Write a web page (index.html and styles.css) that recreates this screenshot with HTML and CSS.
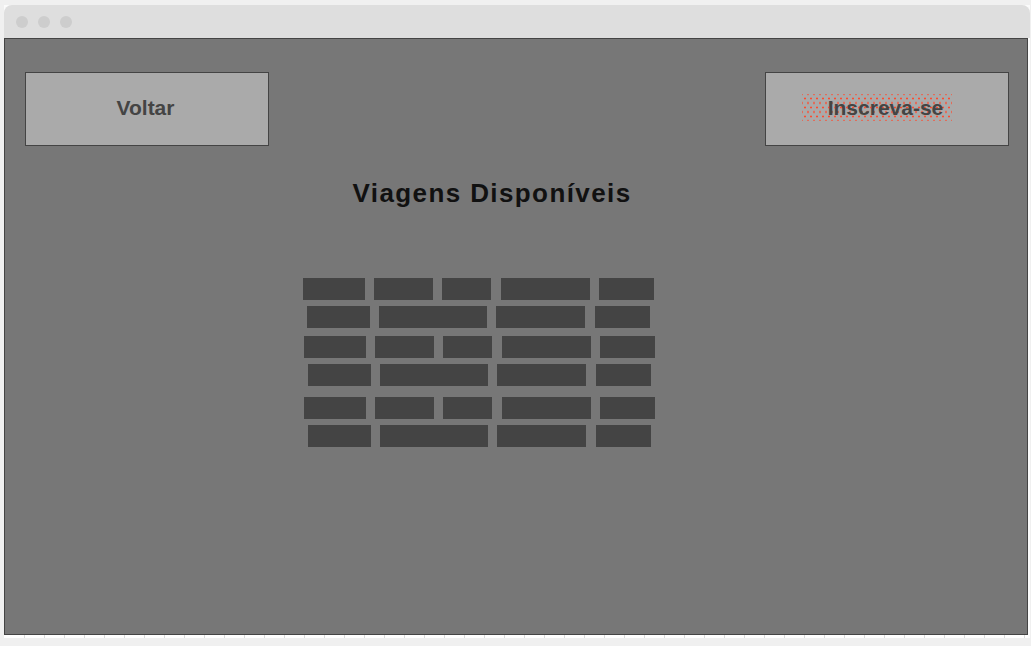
FILE: index.html
```html
<!DOCTYPE html>
<html lang="pt">
<head>
<meta charset="utf-8">
<title>Viagens Disponíveis</title>
<link rel="stylesheet" href="styles.css">
</head>
<body>
<div class="window">
  <div class="titlebar">
    <span class="dot"></span><span class="dot"></span><span class="dot"></span>
  </div>
  <div class="screen">
    <div class="topbar">
      <button class="btn">Voltar</button>
      <button class="btn btn-marked"><span class="marked-area"></span><span class="btn-label">Inscreva-se</span></button>
    </div>
    <h1 class="title">Viagens Disponíveis</h1>
    <div class="trips">
      <div class="group group-first">
        <div class="row row-a">
          <span class="brick w62"></span><span class="brick w59"></span><span class="brick w49"></span><span class="brick w89 nudge"></span><span class="brick w55"></span>
        </div>
        <div class="row row-b">
          <span class="brick w63"></span><span class="brick w108"></span><span class="brick w89"></span><span class="brick w55 nudge"></span>
        </div>
      </div>
      <div class="group group-second">
        <div class="row row-a">
          <span class="brick w62"></span><span class="brick w59"></span><span class="brick w49"></span><span class="brick w89 nudge"></span><span class="brick w55"></span>
        </div>
        <div class="row row-b">
          <span class="brick w63"></span><span class="brick w108"></span><span class="brick w89"></span><span class="brick w55 nudge"></span>
        </div>
      </div>
      <div class="group group-third">
        <div class="row row-a">
          <span class="brick w62"></span><span class="brick w59"></span><span class="brick w49"></span><span class="brick w89 nudge"></span><span class="brick w55"></span>
        </div>
        <div class="row row-b">
          <span class="brick w63"></span><span class="brick w108"></span><span class="brick w89"></span><span class="brick w55 nudge"></span>
        </div>
      </div>
    </div>
  </div>
  <div class="ruler"></div>
</div>
</body>
</html>
```

FILE: styles.css
```css
* { box-sizing: border-box; }

html, body {
  margin: 0;
  padding: 0;
  background: #f0f0f0;
  font-family: "Liberation Sans", Arial, sans-serif;
}

.window {
  margin: 5px 0 0 4px;
  width: 1026px;
  background: #fbfbfb;
}

.titlebar {
  height: 33px;
  background: #dedede;
  border-radius: 8px 8px 0 0;
  display: flex;
  align-items: center;
  gap: 10px;
  padding-left: 12px;
}

.dot {
  width: 12px;
  height: 12px;
  border-radius: 50%;
  background: #cdcdcd;
}

.screen {
  width: 1024px;
  height: 597px;
  border: 1px solid #444;
  background: #777;
  padding: 33px 18px 0 20px;
}

.topbar {
  display: flex;
  justify-content: space-between;
}

.btn {
  position: relative;
  width: 244px;
  height: 74px;
  background: #aaa;
  border: 1px solid #444;
  color: #444;
  font-family: "Liberation Sans", Arial, sans-serif;
  font-weight: bold;
  font-size: 21px;
  padding: 0 3px 3px 0;
  margin: 0;
}

.btn-label {
  position: relative;
}

.marked-area {
  position: absolute;
  left: 36px;
  top: 21px;
  width: 150px;
  height: 27px;
  background-image:
    radial-gradient(circle, #ff4a2e 0.9px, transparent 1.2px),
    radial-gradient(circle, #ff4a2e 0.9px, transparent 1.2px);
  background-size: 6px 9px, 6px 9px;
  background-position: 0 0, 3px 4.5px;
}

.title {
  margin: 32px 0 0 -20px;
  width: 974px;
  text-align: center;
  font-size: 26px;
  line-height: 30px;
  font-weight: bold;
  letter-spacing: 1.4px;
  color: #111;
}

.trips {
  margin-top: 70px;
  display: flex;
  flex-direction: column;
}

.group {
  display: flex;
  flex-direction: column;
  gap: 6px;
}

.group-first { margin-left: 278px; }
.group-second { margin-left: 279px; margin-top: 8px; }
.group-third { margin-left: 279px; margin-top: 11px; }

.row {
  display: flex;
  gap: 9px;
  height: 22px;
}

.row-b { padding-left: 4px; }

.brick {
  display: block;
  height: 22px;
  background: #444;
}

.nudge { margin-left: 1px; }

.w49 { width: 49px; }
.w55 { width: 55px; }
.w59 { width: 59px; }
.w62 { width: 62px; }
.w63 { width: 63px; }
.w89 { width: 89px; }
.w108 { width: 108px; }

.ruler {
  height: 3px;
  width: 1024px;
  background-color: #fff;
  background-image: repeating-linear-gradient(to right, transparent 0, transparent 19px, #dcdcdc 19px, #dcdcdc 20px);
  background-position: 1px 0;
}
```
